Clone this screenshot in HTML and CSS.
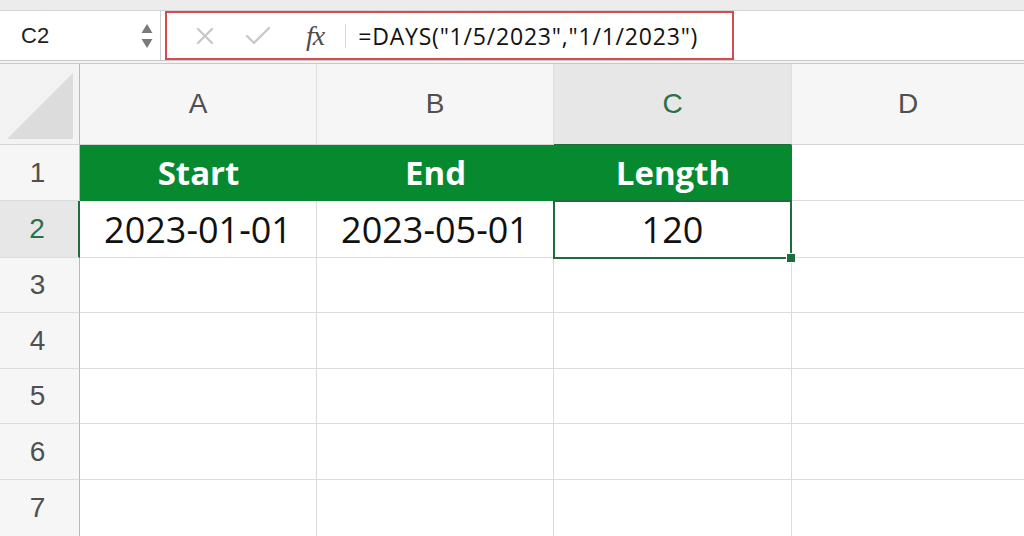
FILE: index.html
```html
<!DOCTYPE html>
<html>
<head>
<meta charset="utf-8">
<link rel="stylesheet" href="styles.css">
</head>
<body>
<div class="app">
  <div class="topstrip"></div>
  <div class="fbar">
    <div class="namebox">
      <span class="ref">C2</span>
      <span class="spin">
        <svg width="12" height="28" viewBox="0 0 12 28"><path d="M6 2 L11.5 11 L0.5 11 Z" fill="#7a7a7a"/><path d="M0.5 17 L11.5 17 L6 26 Z" fill="#7a7a7a"/></svg>
      </span>
    </div>
    <div class="formula">
      <span class="ico cancel"><svg width="18" height="18" viewBox="0 0 18 18"><path d="M2 2 L16 16 M16 2 L2 16" stroke="#c9c9c9" stroke-width="2.4" stroke-linecap="round"/></svg></span>
      <span class="ico ok"><svg width="26" height="20" viewBox="0 0 26 20"><path d="M2 10 L9 17 L24 2" stroke="#c9c9c9" stroke-width="2.4" fill="none" stroke-linecap="round" stroke-linejoin="round"/></svg></span>
      <span class="fx">fx</span>
      <span class="divider"></span>
      <span class="ftext">=DAYS("1/5/2023","1/1/2023")</span>
    </div>
    <div class="fill"></div>
  </div>
  <div class="gap"></div>
  <div class="sheet">
    <div class="corner"><svg class="tri" width="66" height="66" viewBox="0 0 66 66"><path d="M66 0 L66 66 L0 66 Z" fill="#dcdcdc"/></svg></div>
    <div class="ch">A</div>
    <div class="ch">B</div>
    <div class="ch sel">C</div>
    <div class="ch last">D</div>

    <div class="rh">1</div>
    <div class="c head">Start</div>
    <div class="c head">End</div>
    <div class="c head">Length</div>
    <div class="c last"></div>

    <div class="rh sel">2</div>
    <div class="c val">2023-01-01</div>
    <div class="c val">2023-05-01</div>
    <div class="c val active">120</div>
    <div class="c last"></div>

    <div class="rh">3</div><div class="c"></div><div class="c"></div><div class="c"></div><div class="c last"></div>
    <div class="rh">4</div><div class="c"></div><div class="c"></div><div class="c"></div><div class="c last"></div>
    <div class="rh">5</div><div class="c"></div><div class="c"></div><div class="c"></div><div class="c last"></div>
    <div class="rh">6</div><div class="c"></div><div class="c"></div><div class="c"></div><div class="c last"></div>
    <div class="rh">7</div><div class="c"></div><div class="c"></div><div class="c"></div><div class="c last"></div>
  </div>
</div>
</body>
</html>
```

FILE: styles.css
```css
* { box-sizing: border-box; }
html, body { margin: 0; padding: 0; background: #fff; overflow: hidden; }
.app { width: 1024px; height: 536px; overflow: hidden; font-family: "Liberation Sans", Arial, sans-serif; }

.topstrip { height: 11px; background: #ececec; border-bottom: 1px solid #d2d2d2; }

.fbar { height: 50px; display: flex; align-items: stretch; background: #fff; border-bottom: 1px solid #c9c9c9; }
.namebox { width: 161px; display: flex; align-items: center; justify-content: space-between; padding: 0 7px 0 21px; border-right: 1px solid #d0d0d0; }
.ref { font-size: 22px; color: #222; font-family: "Liberation Sans", Arial, sans-serif; }
.spin { display: flex; align-items: center; }

.formula { width: 569px; margin-left: 4px; border: 2px solid #d84a50; display: flex; align-items: center; padding-left: 29px; }
.ico { display: flex; align-items: center; }
.cancel { width: 18px; }
.ok { margin-left: 31px; }
.fx { margin-left: 35px; font-family: "Liberation Serif", "Times New Roman", serif; font-style: italic; font-size: 28px; color: #4d4d4d; letter-spacing: -1px; line-height: 1; }
.divider { width: 1px; height: 24px; background: #d6d6d6; margin-left: 21px; }
.ftext { margin-left: 12px; font-family: "Open Sans", sans-serif; font-size: 23px; letter-spacing: 0.8px; color: #111; white-space: nowrap; }
.fill { flex: 1; }

.gap { height: 3px; background: #f3f3f3; border-bottom: 1px solid #c9c9c9; }

.sheet { display: grid; grid-template-columns: 80px 237px 237px 238px 232px; grid-template-rows: 81px 56px 57px 55px 56px 55px 56px 57px; }

.corner { background: #f3f3f3; border-right: 1px solid #b9b9b9; border-bottom: 1px solid #d4d4d4; display: flex; align-items: flex-end; justify-content: flex-end; padding: 0 6px 5px 0; }
.ch { background: #f6f6f6; border-right: 1px solid #dedede; border-bottom: 1px solid #d4d4d4; display: flex; align-items: center; justify-content: center; font-size: 28px; color: #505050; }
.ch.sel { background: #e7e7e7; color: #2a7148; border-bottom: 1px solid #1f6d3e; }
.ch.last { border-right: none; }

.rh { background: #f6f6f6; border-right: 1px solid #b9b9b9; border-bottom: 1px solid #dcdcdc; display: flex; align-items: center; justify-content: center; font-size: 28px; color: #505050; padding-right: 4px; }
.rh.sel { background: #e7e7e7; color: #2a7148; border-right: 2px solid #1f6d3e; }

.c { border-right: 1px solid #dcdcdc; border-bottom: 1px solid #dcdcdc; display: flex; align-items: center; justify-content: center; }
.c.last { border-right: none; }
.c.head { background: #06892f; border-right: none; border-bottom-color: #06892f; color: #fff; font-family: "Open Sans", sans-serif; font-weight: 700; font-size: 33px; }
.c.val { font-family: "Open Sans", sans-serif; font-size: 36px; color: #111; }
.c.active { position: relative; }
.c.active::after { content: ""; position: absolute; left: -1px; top: -1px; right: -1px; bottom: -2px; border: 2px solid #1f6d3e; pointer-events: none; }
.c.active::before { content: ""; position: absolute; right: -5px; bottom: -6px; width: 8px; height: 8px; background: #1f6d3e; border: 1px solid #fff; z-index: 2; }
```
